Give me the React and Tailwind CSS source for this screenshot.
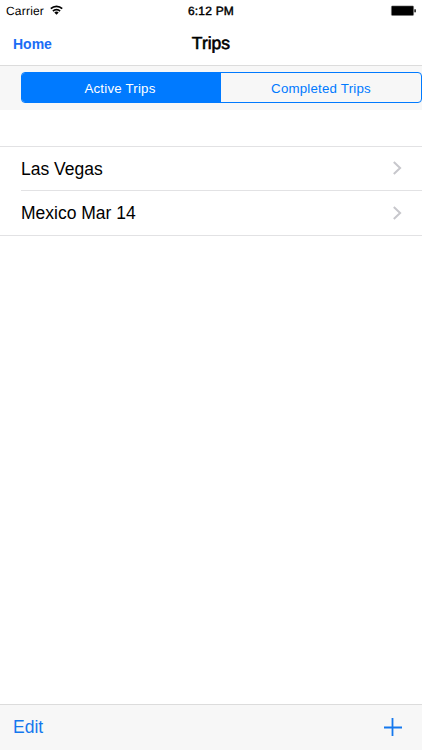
import { useState } from "react";

const trips = {
  active: ["Las Vegas", "Mexico Mar 14"],
  completed: [],
};

function WifiIcon() {
  return (
    <svg className="mb-[2px]" width="13" height="10" viewBox="0 0 13 10" fill="none" stroke="#000" strokeWidth="1.7">
      <path d="M0.8 3.7a8.1 8.1 0 0 1 11.4 0" />
      <path d="M2.9 6.1a5.1 5.1 0 0 1 7.2 0" />
      <path d="M6.5 9.8 4.3 7.6a3.1 3.1 0 0 1 4.4 0z" fill="#000" stroke="none" />
    </svg>
  );
}

function BatteryIcon() {
  return (
    <svg width="26" height="12" viewBox="0 0 26 12">
      <rect x="1.4" y="0.9" width="22.2" height="9.6" rx="1" fill="#000" stroke="#777" strokeWidth="0.6" />
      <rect x="24.3" y="4.3" width="1.6" height="3" fill="#222" />
    </svg>
  );
}

function TripRow({ name, last }) {
  return (
    <li className="pl-[21px]">
      <button
        className={`flex h-[44px] w-full items-center justify-between pr-[20px] text-left ${
          last ? "" : "border-b border-[#e2e2e4]"
        }`}
      >
        <span className="text-[17.5px] leading-[22px]">{name}</span>
        <svg
          className="mb-[1px]"
          width="10"
          height="14"
          viewBox="0 0 10 14"
          fill="none"
          stroke="#c7c7cc"
          strokeWidth="2"
        >
          <path d="M1.8 1 8.1 7 1.8 13" />
        </svg>
      </button>
    </li>
  );
}

function App() {
  const [tab, setTab] = useState("active");
  const rows = trips[tab];

  return (
    <div className="flex h-screen w-full flex-col overflow-hidden bg-white font-['Liberation_Sans',Arial,sans-serif] text-black [text-rendering:geometricPrecision]">
      {/* Status bar */}
      <div className="grid h-[22px] grid-cols-3 items-center pl-[6px] pr-[6px] text-[12px] leading-none">
        <div className="flex items-center gap-[6px]">
          <span className="tracking-[0.2px]">Carrier</span>
          <WifiIcon />
        </div>
        <span className="text-center tracking-[0.2px] [-webkit-text-stroke:0.45px]">6:12 PM</span>
        <div className="flex justify-end">
          <BatteryIcon />
        </div>
      </div>

      {/* Navigation bar */}
      <header className="grid h-[44px] grid-cols-3 items-center border-b border-[#dcdcdc] px-[12px]">
        <button className="pl-[1px] text-left text-[14px] leading-none font-bold text-[#1a6cf5]">Home</button>
        <h1 className="text-center text-[17.5px] leading-none [-webkit-text-stroke:0.6px]">Trips</h1>
      </header>

      {/* Active / completed switch */}
      <div className="h-[44px] bg-[#f7f7f7] pt-[6px] pl-[21px]">
        <div className="flex h-[31px] overflow-hidden rounded-[4px] border border-[#007aff] text-[13.3px] tracking-[0.2px]">
          <button
            onClick={() => setTab("active")}
            className={`w-[199px] pt-[2px] pr-[3px] ${tab === "active" ? "bg-[#007aff] text-white" : "text-[#007aff]"}`}
          >
            Active Trips
          </button>
          <button
            onClick={() => setTab("completed")}
            className={`flex-1 pt-[2px] ${tab === "completed" ? "bg-[#007aff] text-white" : "text-[#007aff]"}`}
          >
            Completed Trips
          </button>
        </div>
      </div>

      {/* Trip list */}
      <main className="flex-1 pt-[36px]">
        <ul className="border-y border-[#e2e2e4]">
          {rows.map((name, i) => (
            <TripRow key={name} name={name} last={i === rows.length - 1} />
          ))}
        </ul>
      </main>

      {/* Toolbar */}
      <footer className="flex h-[46px] items-center justify-between border-t border-[#dcdcdc] bg-[#f7f7f7] pr-[20px] pl-[13px] text-[#1478ee]">
        <button className="pt-[1px] text-[17.5px] leading-none">Edit</button>
        <svg className="mb-[1px]" width="18" height="18" viewBox="0 0 18 18" stroke="currentColor" strokeWidth="1.8">
          <path d="M8.5 0v18M0 9.5h18" />
        </svg>
      </footer>
    </div>
  );
}

export default App;
